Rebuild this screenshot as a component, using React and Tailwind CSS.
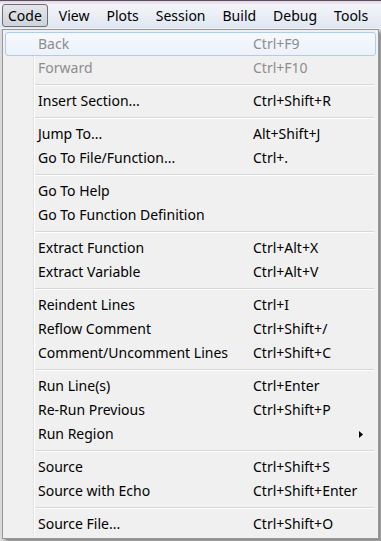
import { Fragment } from 'react';

const menuBar = ['Code', 'View', 'Plots', 'Session', 'Build', 'Debug', 'Tools'];

const groups = [
  [
    { label: 'Back', keys: 'Ctrl+F9', disabled: true, hover: true },
    { label: 'Forward', keys: 'Ctrl+F10', disabled: true },
  ],
  [{ label: 'Insert Section...', keys: 'Ctrl+Shift+R' }],
  [
    { label: 'Jump To...', keys: 'Alt+Shift+J' },
    { label: 'Go To File/Function...', keys: 'Ctrl+.' },
  ],
  [{ label: 'Go To Help' }, { label: 'Go To Function Definition' }],
  [
    { label: 'Extract Function', keys: 'Ctrl+Alt+X' },
    { label: 'Extract Variable', keys: 'Ctrl+Alt+V' },
  ],
  [
    { label: 'Reindent Lines', keys: 'Ctrl+I' },
    { label: 'Reflow Comment', keys: 'Ctrl+Shift+/' },
    { label: 'Comment/Uncomment Lines', keys: 'Ctrl+Shift+C' },
  ],
  [
    { label: 'Run Line(s)', keys: 'Ctrl+Enter' },
    { label: 'Re-Run Previous', keys: 'Ctrl+Shift+P' },
    { label: 'Run Region', submenu: true },
  ],
  [
    { label: 'Source', keys: 'Ctrl+Shift+S' },
    { label: 'Source with Echo', keys: 'Ctrl+Shift+Enter' },
  ],
  [{ label: 'Source File...', keys: 'Ctrl+Shift+O' }],
];

function MenuItem({ item }) {
  const color = item.disabled ? 'text-[#8d8d8d]' : 'text-[#000000]';
  return (
    <div
      className={
        'relative flex h-[24px] items-center rounded-[3px] border ' +
        (item.hover
          ? 'border-[#aeccef] bg-[linear-gradient(#f6f9fd,#ebf2fb)]'
          : 'border-transparent')
      }
    >
      <span className={'w-[247px] shrink-0 pl-[32px] ' + color}>{item.label}</span>
      <span className={'flex-1 ' + color}>{item.keys}</span>
      {item.submenu && (
        <svg width="4" height="7" viewBox="0 0 4 7" className="mr-[12px]">
          <path d="M0 0 L4 3.5 L0 7 Z" fill="#000" />
        </svg>
      )}
    </div>
  );
}

export default function App() {
  return (
    <div
      className="h-[541px] w-[381px] overflow-hidden bg-[#dadada] text-[14px] leading-none"
      style={{ fontFamily: '"Noto Sans", "Open Sans", sans-serif' }}
    >
      <div className="h-[29px] border-t border-[#5e4e5f] bg-[linear-gradient(#dcd6e2_0px,#f2f4f9_4px,#e0e7f1_27px,#ffffff_28px)]">
        <div className="flex items-center gap-[5px] pl-[2px] pt-[3px]">
          {menuBar.map((name, i) => (
            <div
              key={name}
              className={
                'flex h-[23px] items-center rounded-[3px] border px-[5px] text-[#000] ' +
                (i === 0
                  ? 'border-[#6f7074] bg-[linear-gradient(#e4e6ea,#cfd3da)]'
                  : 'border-transparent')
              }
            >
              {name}
            </div>
          ))}
        </div>
      </div>

      <div className="relative ml-[2px] w-[377px] border border-[#979797] bg-[#f0f0f0] p-[2px] shadow-[3px_3px_3px_rgba(0,0,0,0.35)]">
        <div className="absolute bottom-[2px] left-[30px] top-[2px] w-[2px] border-l border-r border-l-[#e2e3e3] border-r-[#ffffff]" />
        {groups.map((group, gi) => (
          <Fragment key={gi}>
            {gi > 0 && (
              <div className="flex h-[9px] items-center pl-[28px] pr-[2px]">
                <div className="h-[2px] w-full border-b border-t border-b-[#ffffff] border-t-[#d7d7d7]" />
              </div>
            )}
            {group.map((item) => (
              <MenuItem key={item.label} item={item} />
            ))}
          </Fragment>
        ))}
      </div>
    </div>
  );
}
